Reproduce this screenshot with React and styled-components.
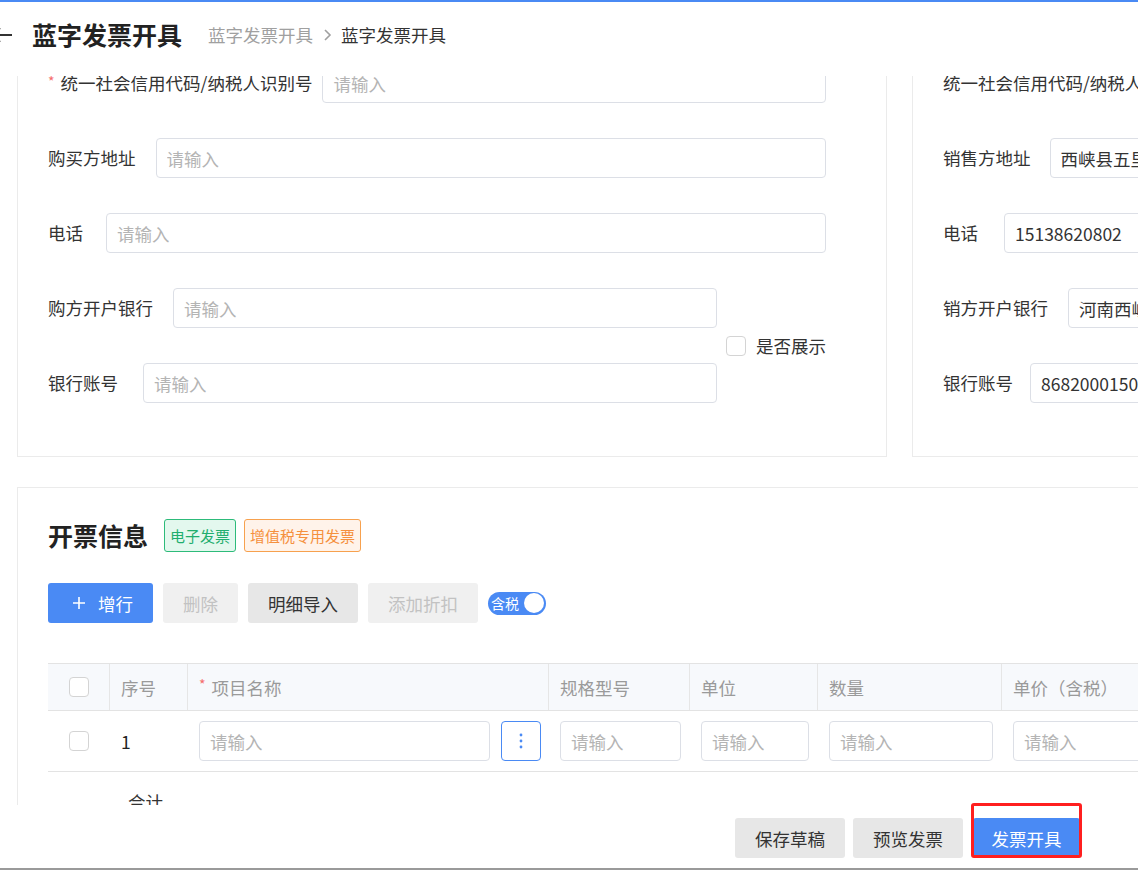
import React, { useLayoutEffect, useRef } from "react";
import styled, { createGlobalStyle } from "styled-components";

const GlobalStyle = createGlobalStyle`
  html, body {
    margin: 0;
    padding: 0;
    overflow: hidden;
    background: #fff;
  }
  body {
    font-family: "Noto Sans CJK SC", "Noto Sans", sans-serif;
    color: #333;
  }
  * {
    box-sizing: border-box;
  }
`;

const BLUE = "#4a8af4";
const FS = "17.5px";

const Page = styled.div`
  height: 100vh;
  display: flex;
  flex-direction: column;
  overflow: hidden;
`;

const TopBar = styled.header`
  height: 76px;
  flex-shrink: 0;
  border-top: 2px solid ${BLUE};
  display: flex;
  align-items: center;
  padding-bottom: 9px;
  background: #fff;
  overflow: hidden;
`;

const Back = styled.svg`
  margin-left: -10px;
  width: 24px;
  height: 24px;
  flex-shrink: 0;
`;

const PageTitle = styled.h1`
  margin: 0 0 0 18px;
  font-size: 25px;
  font-weight: 700;
  color: #222;
  line-height: 1;
`;

const Crumbs = styled.nav`
  margin-left: 26px;
  display: flex;
  align-items: center;
  gap: 9px;
  font-size: ${FS};
  line-height: 1;
`;

const Crumb = styled.span`
  color: ${(p) => (p.$current ? "#333" : "#a0a0a0")};
`;

const Scroll = styled.main`
  flex: 1;
  overflow: hidden;
  position: relative;
`;

const Inner = styled.div`
  width: 1700px;
  padding: 16px 0 80px 17px;
`;

const CardsRow = styled.div`
  display: flex;
  gap: 25px;
`;

const Card = styled.section`
  width: ${(p) => p.$width}px;
  border: 1px solid #ebebeb;
  background: #fff;
  padding: ${(p) => p.$pad || "30px 60px 53px 30px"};
`;

const InvoiceCard = styled(Card)`
  margin-top: 30px;
`;

const Rows = styled.div`
  display: flex;
  flex-direction: column;
  gap: 35px;
`;

const Row = styled.div`
  display: flex;
  align-items: center;
  height: 40px;
`;

const Label = styled.label`
  flex-shrink: 0;
  margin-right: ${(p) => p.$gap ?? 20}px;
  font-size: ${FS};
  line-height: 40px;
  white-space: nowrap;
  color: #333;
`;

const Star = styled.span`
  color: #f56c6c;
  font-size: 14px;
  margin-right: 6px;
  position: relative;
  top: -3px;
`;

const TextInput = styled.input`
  flex: 1;
  min-width: 0;
  height: 40px;
  border: 1px solid #dcdfe6;
  border-radius: 4px;
  padding: 0 10px;
  font-family: inherit;
  font-size: ${FS};
  color: #333;
  background: #fff;
  outline: none;
  &::placeholder {
    color: #b4b4b4;
  }
`;

const SplitRows = styled.div`
  display: flex;
  align-items: center;
`;

const SplitMain = styled(Rows)`
  flex: 1;
`;

const ShowToggle = styled.div`
  width: 100px;
  margin-left: 9px;
  display: flex;
  align-items: center;
  gap: 10px;
  font-size: ${FS};
  color: #333;
  white-space: nowrap;
`;

const Check = styled.span`
  width: 20px;
  height: 20px;
  flex-shrink: 0;
  border: 1px solid #d4d4d4;
  border-radius: 4px;
  background: #fff;
  display: inline-block;
`;

const TitleRow = styled.div`
  display: flex;
  align-items: center;
  height: 33px;
`;

const SectionTitle = styled.h2`
  margin: 0 16px 0 0;
  font-size: 25px;
  font-weight: 700;
  color: #222;
  line-height: 1;
`;

const Tag = styled.span`
  height: 33px;
  margin-right: 8px;
  padding: 0 5px;
  display: inline-flex;
  align-items: center;
  font-size: 15px;
  border-radius: 3px;
  color: ${(p) => (p.$tone === "green" ? "#1fae6e" : "#f5903d")};
  border: 1px solid ${(p) => (p.$tone === "green" ? "#2dbb7a" : "#f7a14e")};
  background: ${(p) => (p.$tone === "green" ? "#e3f8ee" : "#fff3ea")};
`;

const Toolbar = styled.div`
  margin-top: 31px;
  display: flex;
  align-items: center;
  gap: 10px;
`;

const Btn = styled.button`
  height: 40px;
  padding: 0 ${(p) => p.$px ?? 20}px;
  border: none;
  border-radius: 3px;
  font-family: inherit;
  font-size: ${FS};
  display: inline-flex;
  align-items: center;
  gap: 13px;
  cursor: pointer;
  white-space: nowrap;
  background: ${(p) =>
    p.$kind === "primary" ? BLUE : p.$kind === "disabled" ? "#f0f0f0" : "#e7e7e7"};
  color: ${(p) =>
    p.$kind === "primary" ? "#fff" : p.$kind === "disabled" ? "#c2c2c2" : "#333"};
`;

const AddBtn = styled(Btn)`
  padding-left: 25px;
`;

const Switch = styled.span`
  width: 58px;
  height: 23px;
  border-radius: 12px;
  background: ${BLUE};
  display: inline-flex;
  align-items: center;
  justify-content: space-between;
  padding: 0 2px 0 3px;
  color: #fff;
  font-size: 14px;
  line-height: 1;
`;

const Knob = styled.span`
  width: 20px;
  height: 20px;
  border-radius: 50%;
  background: #fff;
`;

const COLS = "62px 78px 361px 141px 128px 184px 200px 200px 200px";

const Table = styled.div`
  margin-top: 40px;
  width: 1554px;
  border-top: 1px solid #e3e3e3;
`;

const HeadRow = styled.div`
  display: grid;
  grid-template-columns: ${COLS};
  height: 47px;
  background: #f7f9fc;
  border-bottom: 1px solid #e3e3e3;
`;

const HeadCell = styled.div`
  display: flex;
  align-items: center;
  padding-left: ${(p) => p.$pl ?? 11}px;
  font-size: ${FS};
  color: #9a9a9a;
  border-right: 1px solid #e6e6e6;
  white-space: nowrap;
`;

const BodyRow = styled.div`
  display: grid;
  grid-template-columns: ${COLS};
  height: 61px;
  border-bottom: 1px solid #e3e3e3;
`;

const Cell = styled.div`
  display: flex;
  align-items: center;
  gap: 11px;
  padding: ${(p) => p.$pad || "0 9px 0 11px"};
  font-size: ${FS};
  color: #222;
  min-width: 0;
`;

const MoreBtn = styled.button`
  width: 40px;
  height: 40px;
  flex-shrink: 0;
  border: 1px solid ${BLUE};
  border-radius: 4px;
  background: #fff;
  display: flex;
  align-items: center;
  justify-content: center;
  padding: 0;
`;

const SumRow = styled.div`
  height: 58px;
  display: flex;
  align-items: center;
  padding-left: 80px;
  font-size: ${FS};
  color: #333;
`;

const Footer = styled.footer`
  height: 65px;
  flex-shrink: 0;
  background: #fff;
  border-bottom: 2px solid #9a9a9a;
  display: flex;
  justify-content: flex-end;
  align-items: flex-start;
  gap: 8px;
  padding: 13px 58px 0 0;
  position: relative;
  z-index: 2;
`;

const Marked = styled.div`
  position: relative;
  margin-left: 2px;
  &::after {
    content: "";
    position: absolute;
    top: -15px;
    left: -2px;
    right: -2px;
    bottom: 0;
    border: 3px solid #ff1f1f;
    border-radius: 3px;
    pointer-events: none;
  }
`;

const Field = ({ label, required, value, gap }) => (
  <Row>
    <Label $gap={gap}>
      {required && <Star>*</Star>}
      {label}
    </Label>
    <TextInput readOnly placeholder="请输入" defaultValue={value} />
  </Row>
);

export default function App() {
  const scrollRef = useRef(null);

  useLayoutEffect(() => {
    if (scrollRef.current) scrollRef.current.scrollTop = 60;
  }, []);

  return (
    <Page>
      <GlobalStyle />
      <TopBar>
        <Back viewBox="0 0 24 24" fill="none" stroke="#333" strokeWidth="2">
          <path d="M22 12H3M10 5l-7 7 7 7" />
        </Back>
        <PageTitle>蓝字发票开具</PageTitle>
        <Crumbs>
          <Crumb>蓝字发票开具</Crumb>
          <svg width="10" height="14" viewBox="0 0 10 14" fill="none" stroke="#a0a0a0" strokeWidth="1.6">
            <path d="M3 2l5 5-5 5" />
          </svg>
          <Crumb $current>蓝字发票开具</Crumb>
        </Crumbs>
      </TopBar>

      <Scroll ref={scrollRef}>
        <Inner>
          <CardsRow>
            <Card $width={870}>
              <Rows>
                <Field label="统一社会信用代码/纳税人识别号" required gap={10} />
                <Field label="购买方地址" />
                <Field label="电话" gap={23} />
                <SplitRows>
                  <SplitMain>
                    <Field label="购方开户银行" />
                    <Field label="银行账号" gap={25} />
                  </SplitMain>
                  <ShowToggle>
                    <Check />
                    是否展示
                  </ShowToggle>
                </SplitRows>
              </Rows>
            </Card>
            <Card $width={760}>
              <Rows>
                <Field label="统一社会信用代码/纳税人识别号" value="91411323MA44A0XX1K" gap={10} />
                <Field label="销售方地址" value="西峡县五里桥镇五里桥村" gap={19} />
                <Field label="电话" value="15138620802" gap={26} />
                <Field label="销方开户银行" value="河南西峡农村商业银行股份有限公司" />
                <Field label="银行账号" value="86820001500001234567" gap={17} />
              </Rows>
            </Card>
          </CardsRow>

          <InvoiceCard $width={1640} $pad="31px 30px 40px 30px">
            <TitleRow>
              <SectionTitle>开票信息</SectionTitle>
              <Tag $tone="green">电子发票</Tag>
              <Tag $tone="orange">增值税专用发票</Tag>
            </TitleRow>

            <Toolbar>
              <AddBtn $kind="primary">
                <svg width="12" height="12" viewBox="0 0 12 12" stroke="#fff" strokeWidth="1.6">
                  <path d="M6 0v12M0 6h12" />
                </svg>
                增行
              </AddBtn>
              <Btn $kind="disabled">删除</Btn>
              <Btn>明细导入</Btn>
              <Btn $kind="disabled">添加折扣</Btn>
              <Switch>
                含税
                <Knob />
              </Switch>
            </Toolbar>

            <Table>
              <HeadRow>
                <HeadCell $pl={21}>
                  <Check />
                </HeadCell>
                <HeadCell>序号</HeadCell>
                <HeadCell>
                  <Star>*</Star>项目名称
                </HeadCell>
                <HeadCell>规格型号</HeadCell>
                <HeadCell>单位</HeadCell>
                <HeadCell>数量</HeadCell>
                <HeadCell>单价（含税）</HeadCell>
                <HeadCell>金额（含税）</HeadCell>
                <HeadCell>税率</HeadCell>
              </HeadRow>
              <BodyRow>
                <Cell $pad="0 0 0 21px">
                  <Check />
                </Cell>
                <Cell>1</Cell>
                <Cell $pad="0 8px 0 11px">
                  <TextInput readOnly placeholder="请输入" />
                  <MoreBtn>
                    <svg width="4" height="16" viewBox="0 0 4 16" fill={BLUE}>
                      <circle cx="2" cy="2" r="1.4" />
                      <circle cx="2" cy="8" r="1.4" />
                      <circle cx="2" cy="14" r="1.4" />
                    </svg>
                  </MoreBtn>
                </Cell>
                <Cell>
                  <TextInput readOnly placeholder="请输入" />
                </Cell>
                <Cell>
                  <TextInput readOnly placeholder="请输入" />
                </Cell>
                <Cell>
                  <TextInput readOnly placeholder="请输入" />
                </Cell>
                <Cell>
                  <TextInput readOnly placeholder="请输入" />
                </Cell>
                <Cell>
                  <TextInput readOnly placeholder="请输入" />
                </Cell>
                <Cell>
                  <TextInput readOnly placeholder="请选择" />
                </Cell>
              </BodyRow>
              <SumRow>合计</SumRow>
            </Table>
          </InvoiceCard>
        </Inner>
      </Scroll>

      <Footer>
        <Btn>保存草稿</Btn>
        <Btn>预览发票</Btn>
        <Marked>
          <Btn $kind="primary" $px={18.5}>发票开具</Btn>
        </Marked>
      </Footer>
    </Page>
  );
}
